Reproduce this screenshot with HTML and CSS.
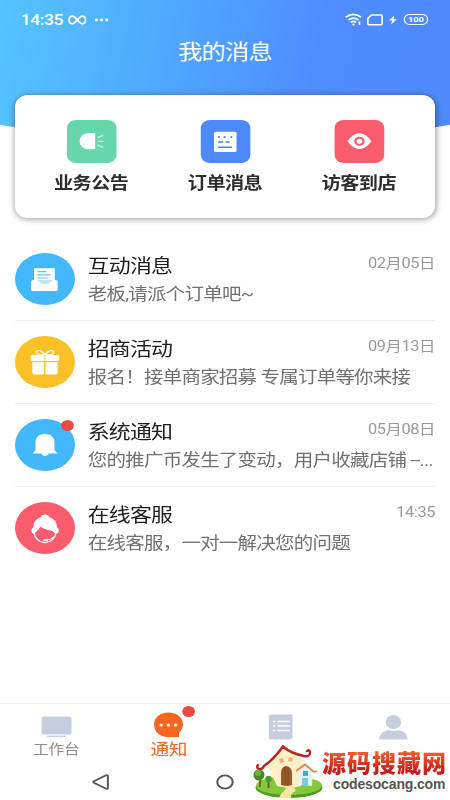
FILE: index.html
```html
<!DOCTYPE html>
<html lang="zh-CN">
<head>
<meta charset="utf-8">
<title>我的消息</title>
<link rel="stylesheet" href="styles.css">
</head>
<body>
<div class="screen">
  <header class="hero">
    <div class="status">
      <span class="time">14:35</span>
      <svg class="inf" width="16" height="10" viewBox="0 0 16 10"><path d="M8 5C6 2.400 5 1.200 3.700 1.200a2.900 3.800 0 0 0 0 7.600C5 8.800 6 7.600 8 5s3-3.800 4.300-3.800a2.900 3.800 0 0 1 0 7.600C11 8.800 10 7.600 8 5z" fill="none" stroke="#fff" stroke-width="1.700"/></svg>
      <svg class="dots" width="12" height="4" viewBox="0 0 12 4" fill="#fff"><circle cx="1.500" cy="2" r="1.400"/><circle cx="6" cy="2" r="1.400"/><circle cx="10.500" cy="2" r="1.400"/></svg>
      <div class="signals">
        <svg width="15" height="13" viewBox="0 0 15 13" fill="none" stroke="#fff" stroke-width="1.600"><path d="M.7 4.200q6.600-5.800 13.200 0M2.900 7q4.400-3.700 8.800 0M5 9.300q2.300-1.900 4.500 0"/><circle cx="7.300" cy="11.400" r="1" fill="#fff" stroke="none"/><path d="M12.500 8.500v3.600" /></svg>
        <svg width="14" height="12" viewBox="0 0 14 12"><path d="M4 1h8.200q1 0 1 1v7.800q0 1-1 1H1.800q-1 0-1-1V4.200z" fill="none" stroke="#fff" stroke-width="1.400" stroke-linejoin="round"/></svg>
        <svg class="bolt" width="7" height="10" viewBox="0 0 7 10"><path d="M4.800.5 0 5.500h2.800L2 9.500l4.900-5.300H4z" fill="#fff"/></svg>
        <span class="battery">100</span>
      </div>
    </div>
    <h1>我的消息</h1>
  </header>

  <section class="card">
    <div class="entry">
      <div class="tile green">
        <svg width="43" height="43" viewBox="0 0 43 43"><path d="M24.500 13v16.300H19c-4.500 0-8-3.600-8-8.100s3.500-8.200 8-8.200z" fill="#fff"/><path d="m27 17.500 4-2M27.300 21.400h4.200M27 25.300l4 2" stroke="#c5f0de" stroke-width="1.400" stroke-linecap="round"/></svg>
      </div>
      <span>业务公告</span>
    </div>
    <div class="entry">
      <div class="tile blue">
        <svg width="43" height="43" viewBox="0 0 43 43"><rect x="11.500" y="11.700" width="19.500" height="20.300" rx="1.500" fill="#fff"/><g fill="#4b83f6"><circle cx="15.700" cy="17" r="1"/><circle cx="20.700" cy="17" r="1"/><circle cx="26.500" cy="17" r="1"/></g><path d="M15 22h4.500m2 0H25M15 27.200h12" stroke="#4b83f6" stroke-width="1.500"/></svg>
      </div>
      <span>订单消息</span>
    </div>
    <div class="entry">
      <div class="tile red">
        <svg width="43" height="43" viewBox="0 0 43 43"><path d="M11 21.300q10.500-16 21 0-10.500 15.500-21 0z" fill="#fff"/><circle cx="21.500" cy="21.300" r="3.500" fill="#fff" stroke="#fa5b6d" stroke-width="2"/></svg>
      </div>
      <span>访客到店</span>
    </div>
  </section>

  <main class="list">
    <article class="row">
      <div class="avatar sky">
        <svg width="52" height="52" viewBox="0 0 52 52"><path d="M16.500 15.200h18V30h-18z" fill="#fff"/><path d="M19.300 18.700h8M19.300 21.900h11.500M19.300 25h9" stroke="#67bff4" stroke-width="1.200"/><path d="M15.700 27h4.800q1.500 3.200 5 3.200t5.500-3.200h4.500q1.500 0 1.500 1.500v8.200q0 1.300-1.500 1.300H15.500q-1.500 0-1.500-1.300v-8.200q0-1.500 1.700-1.500z" fill="#fff"/><path d="M19 27h13.500q-2 4-6.500 4t-7-4z" fill="#bfe3fb"/></svg>
      </div>
      <div class="body"><div class="top"><h2>互动消息</h2><time>02月05日</time></div><p>老板,请派个订单吧~</p></div>
    </article>
    <article class="row">
      <div class="avatar amber">
        <svg width="52" height="52" viewBox="0 0 52 52"><g fill="#fff"><rect x="13.700" y="19" width="24.600" height="6" rx="1"/><path d="M15 26.200h10.200v12.300H17q-2 0-2-2zM26.500 26.200H37v10.300q0 2-2 2h-8.500z"/></g><path d="M26 19c-3-6-8-5-7.500-2.500.3 1.700 3 2.500 7.500 2.500zm0 0c3-6 8-5 7.500-2.500-.3 1.700-3 2.500-7.500 2.500z" fill="none" stroke="#fff" stroke-width="1.300"/><path d="M25.900 19v6" stroke="#fcd25f"/></svg>
      </div>
      <div class="body"><div class="top"><h2>招商活动</h2><time>09月13日</time></div><p>报名！接单商家招募 专属订单等你来接</p></div>
    </article>
    <article class="row">
      <div class="avatar sky">
        <svg width="52" height="52" viewBox="0 0 52 52"><path d="M26 15c5.300 0 8.200 3.300 8.200 8.500V31l2.600 3.500h-7.500Q28 37 26 37t-3.300-2.500h-7.500l2.600-3.500v-7.500c0-5.200 3-8.500 8.200-8.500z" fill="#fff"/></svg>
        <i class="dot"></i>
      </div>
      <div class="body"><div class="top"><h2>系统通知</h2><time>05月08日</time></div><p>您的推广币发生了变动，用户收藏店铺 --...</p></div>
    </article>
    <article class="row">
      <div class="avatar red">
        <svg width="52" height="52" viewBox="0 0 52 52"><path d="M16.200 32c-3.200-2-2-5.500-.2-7 0-5 2.500-8.500 6-9.500 1-4 7-4 8 0 3.800 1 6.400 4.500 6.400 9.500 2 1.600 2.700 5-.5 7-1.500-.6-2.600-2.500-4.300-3.600-4.600-.6-7.600-2-9.600-4-.8 3-3.200 4.500-5.800 7.600z" fill="#fff"/><path d="M16.500 30c.5 6.500 4.500 10.600 9.500 10.600S35 36.500 35.700 30M34 34.500q-3 3.500-6.500 3.500" fill="none" stroke="#fff" stroke-width="1.100"/><ellipse cx="26.500" cy="38" rx="2.200" ry=".9" fill="#fff"/></svg>
      </div>
      <div class="body"><div class="top"><h2>在线客服</h2><time>14:35</time></div><p>在线客服，一对一解决您的问题</p></div>
    </article>
  </main>

  <nav class="tabs">
    <div class="tab">
      <svg width="28" height="24" viewBox="0 0 28 24" fill="#c5cddf"><rect x="1" y="1.500" width="26" height="18" rx="2"/><rect x="6" y="20.600" width="16" height="1.500"/></svg>
      <span>工作台</span>
    </div>
    <div class="tab active">
      <svg width="28" height="26" viewBox="0 0 28 26"><path d="M14 .5c7.500 0 12.600 5 12.600 12 0 3.800-2 6.500-3.400 8v4.600H14C6.500 25 1.500 20 1.500 12.500 1.500 5.500 6.500.5 14 .5z" fill="#fa6520"/><g fill="#fff"><circle cx="7.700" cy="13" r="1.500"/><circle cx="14" cy="13" r="1.500"/><circle cx="20.300" cy="13" r="1.500"/></g></svg>
      <i class="dot"></i>
      <span>通知</span>
    </div>
    <div class="tab narrow">
      <svg width="24" height="26" viewBox="0 0 24 26"><path d="M3 .5h18.500V23q0 2.500-2.500 2.500H3.500Q1 25.500 1 23V2.500Q1 .5 3 .5z" fill="#c5cddf"/><path d="M4.500 7.500h2M8.500 7.500H19M4.500 12h2M8.500 12H19M4.500 16.500h2M8.500 16.500H19" stroke="#fff" stroke-width="1.400"/></svg>
    </div>
    <div class="tab narrow">
      <svg width="26" height="26" viewBox="0 0 26 26" fill="#c5cddf"><ellipse cx="13" cy="8" rx="6.700" ry="7"/><path d="M.7 25.500c0-6 4-8.700 8-9.500q4.300 2 8.600 0c4 .8 8 3.500 8 9.500z"/></svg>
    </div>
  </nav>
  <div class="keys">
    <svg width="16" height="18" viewBox="0 0 16 18"><path d="M13 2.200 2.400 8.200q-1.200.8 0 1.600L13 15.800q1.500.7 1.500-1V3.200q0-1.700-1.500-1z" fill="none" stroke="#555" stroke-width="1.700"/></svg>
    <svg width="16" height="18" viewBox="0 0 16 18"><circle cx="8" cy="9" r="6.700" fill="none" stroke="#555" stroke-width="1.800"/></svg>
  </div>
</div>

<aside class="mark">
  <svg width="72" height="56" viewBox="0 0 72 56">
    <ellipse cx="37" cy="43.500" rx="33.500" ry="10.500" fill="#509b24"/>
    <ellipse cx="37" cy="41.500" rx="33" ry="9.500" fill="#86c83c"/>
    <path d="M15 20 32 3l20 13-3 26q-10 3-24 0z" fill="#fff0c8"/>
    <path d="M45 27l8-6 8 6-1 15-12-1z" fill="#e2f3f5"/>
    <path d="M44 27l9-6.500 8.500 7q3 1 3-1" fill="none" stroke="#df8a48" stroke-width="1.800"/>
    <path d="M30 42q6 2 2 5t-5 7h12q-1-4 3-6t-2-6z" fill="#f5e5a5"/>
    <path d="M12 22Q22 15 31 2.500q8 7 21 9.500 6 1 6-3t-3-2M12 22q-2 4-5 3t-1-4" fill="none" stroke="#b92521" stroke-width="2.500" stroke-linecap="round"/>
    <path d="m27 15 4-1 1 4-4 1zM37 13l4 1-1 4-4-1z" fill="#eab276"/>
    <path d="M29 41V29q0-6 5-7 6 1 6 7v12q-5 2-11 0z" fill="#9a5a2a"/><path d="M33 23v18M36 23v18" stroke="#70401d" stroke-width=".7"/>
    <rect x="51" y="27" width="5" height="5" fill="#4aa9cf"/><rect x="50" y="34" width="6" height="8" fill="#79cbe3"/>
    <path d="M8 33v10M16.500 37v7" stroke="#795325" stroke-width="1.800"/><circle cx="7" cy="31" r="5.500" fill="#408b28"/><circle cx="6" cy="29" r="3" fill="#70b43b"/><circle cx="16.500" cy="35" r="3.200" fill="#4d9b2f"/>
  </svg>
  <div class="brand"><strong>源码搜藏网</strong><span>codesocang.com</span></div>
</aside>
</body>
</html>
```
FILE: styles.css
```css
* { box-sizing: border-box; margin: 0; padding: 0; }
body {
  position: relative;
  width: 450px;
  height: 800px;
  overflow: hidden;
  background: #fff;
  font-family: Roboto, "Noto Sans CJK SC", sans-serif;
}
svg { display: block; flex: none; }

/* 390pt layout stretched to the full window width */
.screen {
  width: 390px;
  height: 800px;
  display: flex;
  flex-direction: column;
  transform: scaleX(1.15385);
  transform-origin: 0 0;
}

.hero {
  height: 150px;
  flex: none;
  background: linear-gradient(100deg, #55c4ff 0%, #4fa5ff 40%, #4e8dff 68%, #4e89fd 100%);
  clip-path: ellipse(390px 144px at 50% 0);
  color: #fff;
}
.status { display: flex; align-items: center; height: 39px; padding: 0 19px 0 18px; }
.time { font-size: 15.200px; font-weight: 500; width: 36px; letter-spacing: -.4px; }
.inf { margin-left: 5px; }
.dots { margin-left: 7px; }
.signals { margin-left: auto; display: flex; align-items: center; gap: 4px; }
.bolt { margin: 0 2px 0 1px; }
.battery {
  width: 21px; height: 11px;
  border: 1px solid #fff; border-radius: 5px;
  font-size: 8px; font-weight: 700; line-height: 9px; text-align: center;
}
.hero h1 { font-size: 21px; letter-spacing: -.6px; font-weight: 400; line-height: 26px; text-align: center; }

.card {
  position: relative;
  display: flex;
  height: 123px;
  flex: none;
  margin: -55px 13px 0;
  padding: 25px 8px 0;
  background: #fff;
  border-radius: 11px / 12px;
  box-shadow: 0 1px 6px rgba(0, 0, 0, .42);
}
.entry { flex: 1; display: flex; flex-direction: column; align-items: center; }
.entry span { margin-top: 9px; font-size: 16.600px; letter-spacing: -.5px; line-height: 24px; font-weight: 700; color: #2d2d2d; }
.tile { width: 43px; height: 43px; border-radius: 8px; }
.green { background: #67d6ac; }
.blue { background: #4e89fc; }
.red { background: #fa5b6d; }

.list { margin: 20px 13px 0; height: 465px; flex: none; }
.row { display: flex; gap: 11px; height: 83px; padding-top: 15px; border-bottom: 1px solid #f0f0f0; }
.row:last-child { border-bottom: 0; }
.avatar { position: relative; width: 52px; height: 52px; border-radius: 50%; flex: none; }
.sky { background: #42b7fb; }
.amber { background: #fbc026; }
.dot { position: absolute; width: 11px; height: 11px; border-radius: 50%; background: #e84b43; }
.avatar .dot { right: 1px; top: 1px; }
.body { flex: 1; min-width: 0; padding-top: 1px; }
.top { display: flex; justify-content: space-between; }
.top h2 { font-size: 19px; letter-spacing: -.7px; font-weight: 400; line-height: 26px; color: #1d1d1d; }
.top time { font-size: 14.200px; line-height: 18px; color: #999; letter-spacing: -.35px; }
.body p { margin-top: 1px; font-size: 16.900px; letter-spacing: -.65px; line-height: 26px; color: #707070; white-space: nowrap; }

.tabs { display: flex; height: 62px; flex: none; border-top: 1px solid #eee; }
.tab { position: relative; flex: 1; display: flex; flex-direction: column; align-items: center; padding-top: 11px; }
.tab span { font-size: 13.700px; letter-spacing: -.3px; line-height: 20px; color: #8e8e8e; }
.narrow { padding-top: 10px; }
.active { padding-top: 8px; }
.active span { font-size: 16.200px; line-height: 23px; color: #f26522; }
.active .dot { left: 60px; top: 2px; }
.keys { display: flex; gap: 92px; padding: 8px 0 0 79px; }

.mark {
  position: absolute;
  left: 252px;
  top: 744px;
  display: flex;
  width: 198px;
  height: 56px;
  background: #fff;
}
.brand { display: flex; flex-direction: column; padding-top: 4px; margin-left: -2px; white-space: nowrap; }
.brand strong {
  font: 900 24px/28px "Noto Sans CJK SC", sans-serif;
  letter-spacing: 1px;
  color: transparent;
  background: linear-gradient(#f0572d 20%, #c81d1b 80%);
  background-clip: text;
  -webkit-background-clip: text;
}
.brand span { margin: 1px 0 0 11px; font: 700 14px/14px "Liberation Sans", sans-serif; letter-spacing: -.15px; color: #555; }
```
